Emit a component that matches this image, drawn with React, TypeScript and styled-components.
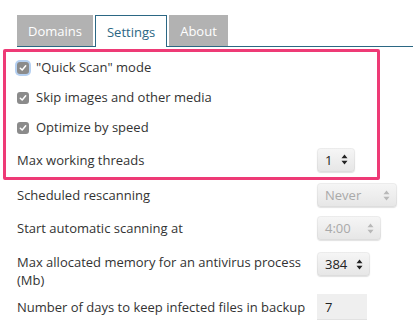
import React from "react";
import styled, { createGlobalStyle, css } from "styled-components";

const GlobalStyle = createGlobalStyle`
  html, body {
    margin: 0;
    padding: 0;
    background: #ffffff;
  }
  body {
    font-family: "Open Sans", "Liberation Sans", sans-serif;
    font-size: 13px;
    color: #333333;
  }
`;

const Page = styled.div`
  width: 413px;
  height: 328px;
  padding: 15px 0 0 3px;
  box-sizing: border-box;
  overflow: hidden;
`;

const TabBar = styled.div`
  display: flex;
  align-items: flex-end;
  gap: 2px;
  margin-left: 14px;
  height: 31px;
  border-bottom: 1px solid #2b6784;
`;

const Tab = styled.div<{ $active?: boolean }>`
  height: 31px;
  box-sizing: border-box;
  padding: 0 11px;
  display: flex;
  align-items: center;
  font-size: 13px;
  color: #ffffff;
  background: #b2b2b2;
  ${({ $active }) =>
    $active &&
    css`
      background: #ffffff;
      color: #2b6784;
      border: 1px solid #2b6784;
      border-bottom: none;
      height: 32px;
      margin-bottom: -1px;
      padding: 0 11px;
    `}
`;

const Highlight = styled.div`
  margin-top: 2px;
  width: 377px;
  box-sizing: border-box;
  border: 3px solid #ee3a76;
  border-radius: 2px;
  padding: 0 0 0 11px;
`;

const Rows = styled.div`
  padding-left: 14px;
`;

const Row = styled.div<{ $h: number; $top?: boolean; $pt?: number }>`
  display: flex;
  align-items: ${({ $top }) => ($top ? "flex-start" : "center")};
  height: ${({ $h }) => $h}px;
  padding-top: ${({ $pt }) => $pt ?? 0}px;
  box-sizing: border-box;
`;

const CheckRow = styled.label`
  display: flex;
  align-items: center;
  gap: 7px;
  height: 30px;
`;

const Box = styled.span<{ $focus?: boolean }>`
  width: 12px;
  height: 12px;
  border-radius: 3px;
  background: #8b8b8b;
  display: inline-flex;
  align-items: center;
  justify-content: center;
  margin-top: 2px;
  ${({ $focus }) =>
    $focus &&
    css`
      box-shadow: 0 0 0 2px rgba(120, 170, 230, 0.55);
    `}
`;

const Label = styled.div<{ $pt?: number }>`
  width: 300px;
  line-height: 18px;
  padding-top: ${({ $pt }) => $pt ?? 0}px;
`;

const Select = styled.div<{ $w: number; $disabled?: boolean }>`
  width: ${({ $w }) => $w}px;
  height: 24px;
  box-sizing: border-box;
  border-radius: 4px;
  background: linear-gradient(#f6f6f6, #e6e6e6);
  box-shadow: 0 1px 1px rgba(0, 0, 0, 0.12), inset 0 0 0 1px rgba(0, 0, 0, 0.04);
  display: flex;
  align-items: center;
  justify-content: space-between;
  padding: 0 7px 0 8px;
  font-size: 13px;
  color: ${({ $disabled }) => ($disabled ? "#a9a9a9" : "#222222")};
`;

const TextInput = styled.div`
  width: 50px;
  height: 26px;
  box-sizing: border-box;
  background: #efefef;
  border-bottom: 1px solid #e2e2e2;
  display: flex;
  align-items: center;
  padding-left: 8px;
  color: #222222;
`;

const Check = () => (
  <svg width="8" height="8" viewBox="0 0 8 8">
    <path d="M1.3 4.2 L3.2 6 L6.7 1.8" fill="none" stroke="#fff" strokeWidth="1.5" strokeLinecap="round" strokeLinejoin="round" />
  </svg>
);

const Arrows = ({ disabled }: { disabled?: boolean }) => (
  <svg width="7" height="11" viewBox="0 0 7 11">
    <path d="M3.5 0.5 L6.5 4.3 L0.5 4.3 Z M3.5 10.5 L6.5 6.7 L0.5 6.7 Z" fill={disabled ? "#b8b8b8" : "#222"} />
  </svg>
);

const Dropdown = ({ value, w, disabled }: { value: string; w: number; disabled?: boolean }) => (
  <Select $w={w} $disabled={disabled}>
    <span>{value}</span>
    <Arrows disabled={disabled} />
  </Select>
);

export default function App() {
  return (
    <>
      <GlobalStyle />
      <Page>
        <TabBar>
          <Tab>Domains</Tab>
          <Tab $active>Settings</Tab>
          <Tab>About</Tab>
        </TabBar>

        <Highlight>
          <CheckRow>
            <Box $focus><Check /></Box>
            "Quick Scan" mode
          </CheckRow>
          <CheckRow>
            <Box><Check /></Box>
            Skip images and other media
          </CheckRow>
          <CheckRow>
            <Box><Check /></Box>
            Optimize by speed
          </CheckRow>
          <Row $h={35}>
            <Label>Max working threads</Label>
            <Dropdown value="1" w={38} />
          </Row>
        </Highlight>

        <Rows>
          <Row $h={30}>
            <Label>Scheduled rescanning</Label>
            <Dropdown value="Never" w={80} disabled />
          </Row>
          <Row $h={36}>
            <Label>Start automatic scanning at</Label>
            <Dropdown value="4:00" w={64} disabled />
          </Row>
          <Row $h={48} $pt={6} $top>
            <Label $pt={1}>Max allocated memory for an antivirus process (Mb)</Label>
            <Dropdown value="384" w={53} />
          </Row>
          <Row $h={26}>
            <Label>Number of days to keep infected files in backup</Label>
            <TextInput>7</TextInput>
          </Row>
        </Rows>
      </Page>
    </>
  );
}
